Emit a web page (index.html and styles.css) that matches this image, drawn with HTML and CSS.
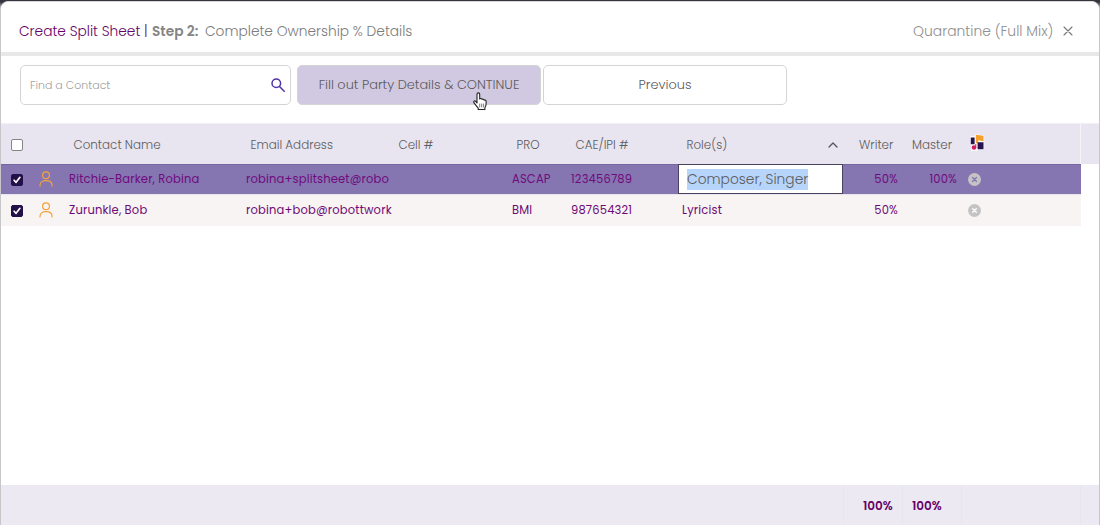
FILE: index.html
```html
<!DOCTYPE html>
<html lang="en">
<head>
<meta charset="utf-8">
<title>Create Split Sheet</title>
<link rel="stylesheet" href="styles.css">
</head>
<body>
<svg class="defs" aria-hidden="true">
  <symbol id="person" viewBox="0 0 14 16"><circle cx="7" cy="4.300" r="3.400"/><path d="M1 15v-.8C1 11.500 3.200 9.700 7 9.700s6 1.800 6 4.500v.8"/></symbol>
  <symbol id="check" viewBox="0 0 12 12"><path d="M2.500 6.300l2.400 2.500 4.600-6"/></symbol>
</svg>
<main class="modal">
  <header class="titlebar">
    <h1 class="title"><span class="name">Create Split Sheet |</span><span class="step">Step 2:</span><span class="subtitle">Complete Ownership % Details</span></h1>
    <span class="track">Quarantine (Full Mix)</span>
    <svg class="close" viewBox="0 0 10 10"><path d="M1 1l8 8M9 1L1 9"/></svg>
  </header>
  <section class="toolbar">
    <div class="search"><span class="placeholder">Find a Contact</span>
      <svg class="magnifier" viewBox="0 0 14 14"><circle cx="5.300" cy="5.300" r="4.300"/><path d="M8.500 8.500l4.700 4.700"/></svg>
    </div>
    <div class="button primary"><span class="continue">Fill out Party Details &amp; CONTINUE</span></div>
    <div class="button"><span class="previous">Previous</span></div>
  </section>
  <section class="table">
    <div class="row head">
      <div class="select"><span class="box"></span></div><div></div>
      <div class="h-name">Contact Name</div><div class="h-email">Email Address</div><div class="h-cell">Cell #</div><div class="h-pro">PRO</div><div class="h-cae">CAE/IPI #</div>
      <div class="sort"><span class="h-role">Role(s)</span><svg class="chevron" viewBox="0 0 10 6"><path d="M1 5l4-4 4 4"/></svg></div>
      <div class="h-writer">Writer</div><div class="h-master">Master</div>
      <div class="brand"><svg class="logo" viewBox="0 0 15 17"><path class="halo" d="M1 3h4.500V1l8 1v13H7v1H2z"/><path class="orange" d="M5.800.8l7.700 1v5.400L8.200 6.300v3H5.800z"/><path class="navy" d="M.8 3.500h3.800v6.700H.8zM7.600 8.300h5.900v6.900H7.600z"/><circle class="pink" cx="4" cy="13.500" r="2.300"/><path class="pink" d="M5.300 10h1v3.500h-1z"/></svg></div>
      <div class="gutter"></div>
    </div>
    <div class="row active">
      <div class="select"><span class="box checked"><svg><use href="#check"/></svg></span></div>
      <div class="avatar"><svg><use href="#person"/></svg></div>
      <div class="b-name">Ritchie-Barker, Robina</div><div class="b-email">robina+splitsheet@robo</div><div></div><div class="b-pro">ASCAP</div><div class="b-cae">123456789</div>
      <div class="editor"><span class="selection">Composer, Singer</span></div>
      <div class="num">50%</div><div class="num">100%</div><div class="delete"><svg viewBox="0 0 13 13"><circle cx="6.500" cy="6.500" r="6.500"/><path class="cross" d="M4.500 4.500l4 4m0-4l-4 4"/></svg></div>
    </div>
    <div class="row alt">
      <div class="select"><span class="box checked"><svg><use href="#check"/></svg></span></div>
      <div class="avatar"><svg><use href="#person"/></svg></div>
      <div class="b-name">Zurunkle, Bob</div><div class="b-email">robina+bob@robottwork</div><div></div><div class="b-pro">BMI</div><div class="b-cae">987654321</div>
      <div class="b-role">Lyricist</div>
      <div class="num">50%</div><div></div><div class="delete"><svg viewBox="0 0 13 13"><circle cx="6.500" cy="6.500" r="6.500"/><path class="cross" d="M4.700 4.700l3.600 3.600m0-3.600l-3.600 3.600"/></svg></div>
    </div>
  </section>
  <footer class="totals"><span class="sum writer">100%</span><span class="sum master">100%</span><span class="sum rest"></span></footer>
</main>
<svg class="cursor" viewBox="0 0 14 19"><path class="hand" d="M4 11V2.300C4 .4 6.700.4 6.700 2.300V7c.4-.8 2.100-.7 2.300.5.700-.8 2-.3 2.100.7 1-.6 2-.1 2 1.200v2.900c0 1.300-.9 2.300-1.200 3.700v1.500H5.200v-1.300C4 14.600 2.500 13 1.100 10.900.1 9.400 1.600 8.300 2.700 9.400z"/><path class="lines" d="M6.700 12v3M8.700 12v3M10.600 12v3"/></svg>
</body>
</html>
```
FILE: styles.css
```css
* { box-sizing: border-box; }
body { margin: 0; height: 525px; padding: 1px 1px 0; overflow: hidden; background: linear-gradient(#37333f 0 2px, #c7c7c9 8px); font: 300 14px Poppins, Inter, "Open Sans", sans-serif; font-feature-settings: "cv11"; color: #5c5c5c; white-space: nowrap; }
svg { display: block; fill: none; stroke-linecap: round; stroke-linejoin: round; }
.defs { display: none; }
.modal { height: 524px; display: flex; flex-direction: column; background: #fff; border-radius: 7px 7px 0 0; border-top: 1px solid #d9d9db; overflow: hidden; }
.titlebar { display: flex; align-items: center; height: 54px; padding: 8px 26px 0 18px; border-bottom: 4px solid #e8e8e8; flex: none; }
.title { margin: 0 auto 0 0; padding-top: 1px; display: flex; font-size: 13.75px; font-weight: 300; color: #7c7c7c; }
.name { width: 133px; color: #650067; }
.step { width: 53px; font-weight: 600; color: #858585; }
.track { width: 150px; color: #8f8f8f; font-size: 13.9px; }
.close { width: 10px; height: 10px; stroke: #777; stroke-width: 1.1; }
.toolbar { display: flex; padding: 9px 19px; height: 67px; flex: none; }
.search, .button { height: 40px; border: 1px solid #d4d4d6; border-radius: 5px; display: flex; align-items: center; }
.search { width: 271px; padding: 0 5px 0 9px; margin-right: 6px; justify-content: space-between; }
.placeholder { font-size: 11px; color: #a0a0a0; }
.magnifier { width: 14px; height: 14px; stroke: #5131a6; stroke-width: 1.5; }
.button { width: 244px; margin-right: 2px; justify-content: center; font-size: 12.9px; }
.primary { background: #d1c9e2; }
.row { display: grid; grid-template-columns: 29px 35px 177px 148px 118px 59px 111px 165px 59px 59px 119px 1fr; align-items: center; }
.head { height: 41px; background: #e8e4f0; font-size: 11.9px; padding-top: 2px; border-top: 1px solid #f2f0f6; }
.h-name, .h-email, .h-cell, .h-pro, .h-cae, .sort { padding-left: 8.5px; }
.sort { display: flex; justify-content: space-between; align-items: center; padding-right: 5px; }
.chevron { width: 10px; height: 6px; stroke: #555; stroke-width: 1.3; }
.h-writer { padding-left: 16px; }
.h-master { padding-left: 10px; }
.brand { padding: 0 0 5px 9px; }
.logo { width: 15px; height: 17px; }
.halo { fill: #fff; stroke: #fff; stroke-width: 1.5; }
.orange { fill: #f5a02c; }
.navy { fill: #28134f; }
.pink { fill: #d41c5c; }
.gutter { align-self: stretch; border-left: 1px solid #f6f4f9; margin-top: -2px; }
.active, .alt { font-size: 11.5px; font-weight: 400; color: #6d0974; width: 1080px; letter-spacing: .18px; }
.active { height: 30px; background: #8575b1; border-top: 1px solid #7466a0; color: #700b7d; }
.alt { height: 32px; background: #f8f4f4; border-top: 1px solid #e9e5ed; }
.select { padding-left: 10px; }
.box { display: block; width: 12px; height: 12px; border: 1px solid #858585; border-radius: 2px; background: #fff; }
.checked { background: #231048; border-color: #231048; }
.checked svg { width: 10px; height: 10px; stroke: #fff; stroke-width: 2; }
.avatar { padding: 0 0 2px 9px; }
.avatar svg { width: 14px; height: 16px; stroke: #f3a33b; stroke-width: 1.2; }
.b-name, .b-email, .b-pro, .b-cae, .b-role { padding-left: 4px; }
.num { text-align: right; padding-right: 4px; }
.editor { height: 30px; margin-top: -1px; border: 1px solid #494361; background: #fff; display: flex; align-items: center; padding-left: 8px; color: #5c5c5c; font-size: 13.8px; font-weight: 300; letter-spacing: 0; }
.selection { background: #b7d4fb; height: 21px; line-height: 22px; }
.delete { padding: 0 0 1px 7px; }
.delete svg { width: 13px; height: 13px; fill: #c5c4c5; }
.cross { stroke: #fff; stroke-width: 1.3; }
.active .cross { stroke: #8575b1; }
.totals { margin-top: auto; height: 40px; background: #ece9f3; display: grid; grid-template-columns: 59px 59px 120px; padding-left: 842px; font-size: 12px; font-weight: 600; color: #650067; align-items: center; flex: none; }
.sum { height: 40px; line-height: 42px; border-left: 1px solid #e7e6ea; }
.writer { padding-left: 19px; }
.master { padding-left: 9px; }
.rest { border-right: 1px solid #e7e6ea; }
.cursor { position: absolute; left: 473px; top: 92px; width: 14px; height: 19px; }
.hand { fill: #fff; stroke: #222; stroke-width: 1.1; }
.lines { stroke: #444; stroke-width: .7; }
```
